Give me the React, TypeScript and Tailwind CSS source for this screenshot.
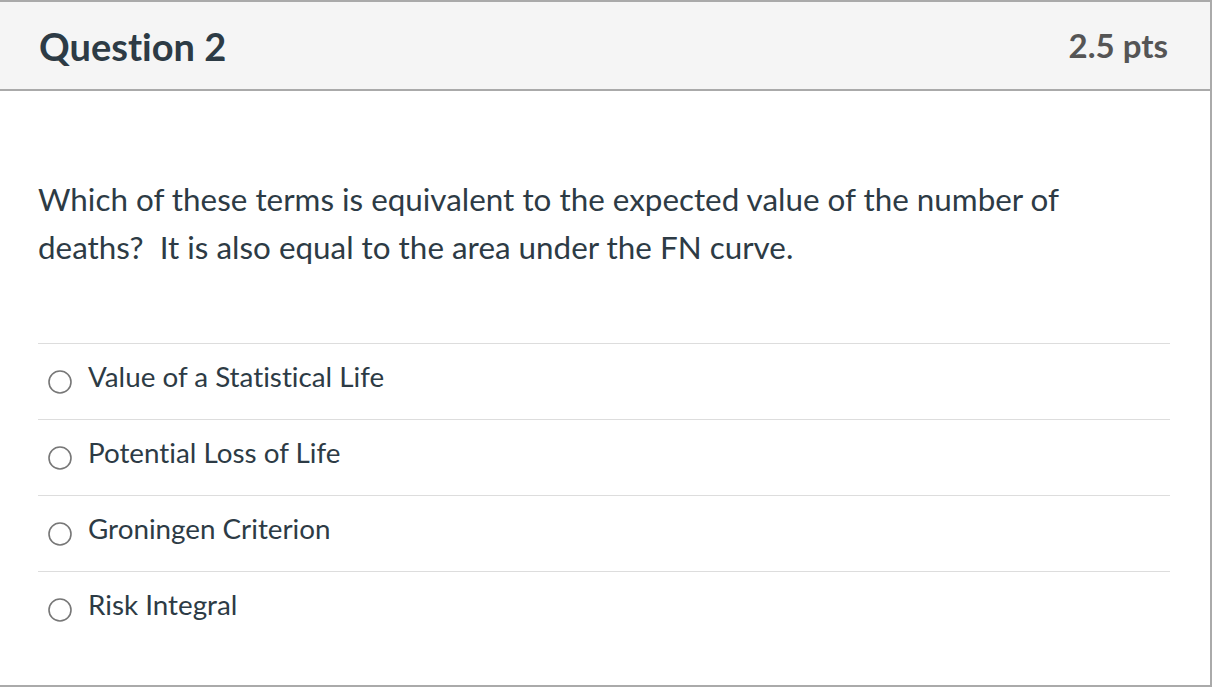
const answers = [
  "Value of a Statistical Life",
  "Potential Loss of Life",
  "Groningen Criterion",
  "Risk Integral",
];

function Radio() {
  return (
    <svg width="26" height="26" viewBox="0 0 26 26" className="shrink-0">
      <circle cx="13" cy="13" r="11" fill="white" stroke="#777" strokeWidth="1.6" />
    </svg>
  );
}

export default function App() {
  return (
    <div className="w-[1214px] h-[694px] bg-white font-['Lato',sans-serif] text-[#2d3b45] [font-variant-ligatures:none]">
      <div className="w-[1212px] border-t-2 border-r-2 border-b-2 border-[#aaaaaa]">
        <div className="h-[89px] bg-[#f5f5f5] border-b-2 border-[#aaaaaa] flex items-center justify-between pl-[39px] pr-[42px]">
          <h2 className="text-[38px] font-bold leading-none">Question 2</h2>
          <div className="text-[33px] font-bold text-[#555] leading-none">2.5 pts</div>
        </div>

        <div className="pl-[38px] pr-[40px] pt-[84px] pb-[38px]">
          <p className="text-[31.4px] leading-[48px]">
            Which of these terms is equivalent to the expected value of the number of deaths?{"\u00a0 "}It
            is also equal to the area under the FN curve.
          </p>

          <div className="mt-[72px]">
            {answers.map((a) => (
              <div key={a} className="h-[76px] border-t border-[#dddddd] flex items-center gap-[15px] pl-[9px]">
                <Radio />
                <span className="text-[27.8px] leading-none -mt-[9px]">{a}</span>
              </div>
            ))}
          </div>
        </div>
      </div>
    </div>
  );
}
